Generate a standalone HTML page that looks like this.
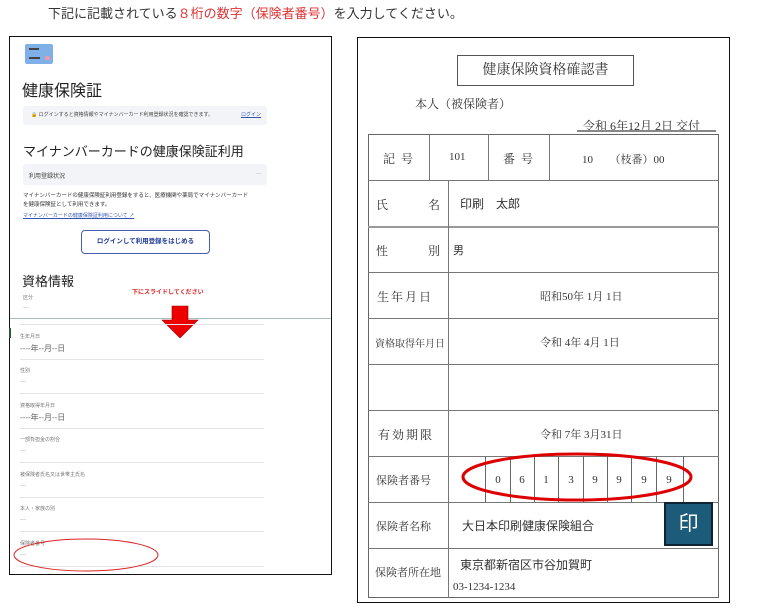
<!DOCTYPE html>
<html><head><meta charset="utf-8"><style>
*{margin:0;padding:0;box-sizing:border-box}
body{width:768px;height:614px;background:#fff;position:relative;overflow:hidden;font-family:"Liberation Sans","Noto Sans CJK JP",sans-serif;color:#222}
.a{position:absolute;white-space:nowrap}
.s{font-family:"Liberation Serif","Noto Serif CJK SC",serif}
.hl{position:absolute;height:1px;background:#e2e4e8;left:20px;width:244px}
.lb{font-size:5px;color:#777;left:20px}
.vv{font-size:6px;color:#aaa;left:20px}
.vd{font-size:8px;color:#666;left:20px}
.tl{position:absolute;background:#777}
.cell{position:absolute;font-size:11px;color:#333}
</style></head><body>
<div class="a" style="left:48px;top:3px;font-size:13px;color:#333">下記に記載されている<span style="color:#d33">８桁の数字（保険者番号）</span>を入力してください。</div>

<!-- left panel -->
<div class="a" style="left:9px;top:36px;width:323px;height:539px;border:1.5px solid #111"></div>
<div class="a" style="left:25px;top:44px;width:28px;height:20px;background:#7fb0e8;border-radius:2px"></div>
<div class="a" style="left:29px;top:48px;width:10px;height:2px;background:#444"></div>
<div class="a" style="left:29px;top:57px;width:11px;height:2px;background:#444"></div>
<div class="a" style="left:45px;top:56px;width:5px;height:4px;background:#f09a9a;border-radius:2px"></div>
<div class="a" style="left:22px;top:77px;font-size:16px;color:#222">健康保険証</div>
<div class="a" style="left:23px;top:106px;width:244px;height:19px;background:#f3f4f7;border-radius:3px"></div>
<div class="a" style="left:31px;top:111px;font-size:5px;color:#444">🔒 ログインすると資格情報やマイナンバーカード利用登録状況を確認できます。</div>
<div class="a" style="left:241px;top:111px;font-size:5px;color:#3455b0;text-decoration:underline">ログイン</div>
<div class="a" style="left:23px;top:141px;font-size:13px;color:#222">マイナンバーカードの健康保険証利用</div>
<div class="a" style="left:23px;top:164px;width:244px;height:21px;background:#f3f4f7;border-radius:3px"></div>
<div class="a" style="left:29px;top:171px;font-size:6px;color:#444">利用登録状況</div>
<div class="a" style="left:256px;top:171px;font-size:5px;color:#aaa">---</div>
<div class="a" style="left:23px;top:192px;font-size:5.5px;color:#333;line-height:9px">マイナンバーカードの健康保険証利用登録をすると、医療機関や薬局でマイナンバーカード<br>を健康保険証として利用できます。</div>
<div class="a" style="left:23px;top:212px;font-size:5px;color:#3455b0;text-decoration:underline">マイナンバーカードの健康保険証利用について ↗</div>
<div class="a" style="left:81px;top:230px;width:129px;height:24px;border:1px solid #4a5fb0;border-radius:4px;font-size:6.5px;font-weight:bold;color:#233a9c;text-align:center;line-height:22px">ログインして利用登録をはじめる</div>
<div class="a" style="left:22px;top:271px;font-size:13px;color:#222">資格情報</div>
<div class="a lb" style="left:23px;top:294px">区分</div>
<div class="a" style="left:132px;top:287px;font-size:6px;font-weight:bold;color:#d22">下にスライドしてください</div>
<div class="a vv" style="left:23px;top:305px">---</div>
<div class="a" style="left:10px;top:318px;width:321px;height:1px;background:#a8bcc8"></div>
<div class="a" style="left:9px;top:328px;width:2px;height:10px;background:#2a5a3a"></div>
<svg class="a" style="left:161px;top:305px" width="38" height="34"><polygon points="11,1 27,1 27,15 37,15 19,33 1,15 11,15" fill="#e00" stroke="#900" stroke-width="0.6"/></svg>
<div class="hl" style="top:324px"></div>
<div class="a lb" style="top:333px">生年月日</div>
<div class="a vd" style="top:343px">----年--月--日</div>
<div class="hl" style="top:359px"></div>
<div class="a lb" style="top:367px">性別</div>
<div class="a vv" style="top:379px">---</div>
<div class="hl" style="top:393px"></div>
<div class="a lb" style="top:402px">資格取得年月日</div>
<div class="a vd" style="top:412px">----年--月--日</div>
<div class="hl" style="top:428px"></div>
<div class="a lb" style="top:436px">一部負担金の割合</div>
<div class="a vv" style="top:448px">---</div>
<div class="hl" style="top:462px"></div>
<div class="a lb" style="top:471px">被保険者氏名又は世帯主氏名</div>
<div class="a vv" style="top:483px">---</div>
<div class="hl" style="top:497px"></div>
<div class="a lb" style="top:505px">本人・家族の別</div>
<div class="a vv" style="top:517px">---</div>
<div class="hl" style="top:531px"></div>
<div class="a lb" style="top:540px">保険者番号</div>
<div class="a vv" style="top:552px">---</div>
<div class="hl" style="top:566px"></div>
<svg class="a" style="left:0;top:0" width="340" height="614"><ellipse cx="86" cy="555" rx="72" ry="16" fill="none" stroke="#d22" stroke-width="1"/></svg>

<!-- right panel -->
<div class="a" style="left:357px;top:37px;width:373px;height:566px;border:1.5px solid #111"></div>
<div class="a s" style="left:457px;top:55px;width:177px;height:31px;border:1px solid #555;font-size:14px;text-align:center;line-height:29px;color:#333">健康保険資格確認書</div>
<div class="a s" style="left:415px;top:95px;font-size:12px;color:#333">本人（被保険者）</div>
<div class="a s" style="left:583px;top:117px;font-size:12px;color:#333">令和 6年12月 2日 交付</div>
<div class="a" style="left:577px;top:130px;width:139px;height:2px;background:#888"></div>
<div class="a" style="left:368px;top:134px;width:351px;height:464px;border:1px solid #666"></div>
<div class="tl" style="left:368px;top:180px;width:351px;height:1px"></div>
<div class="tl" style="left:368px;top:226px;width:351px;height:2px;background:#999"></div>
<div class="tl" style="left:368px;top:272px;width:351px;height:1px"></div>
<div class="tl" style="left:368px;top:318px;width:351px;height:1px"></div>
<div class="tl" style="left:368px;top:364px;width:351px;height:1px"></div>
<div class="tl" style="left:368px;top:410px;width:351px;height:1px"></div>
<div class="tl" style="left:368px;top:456px;width:351px;height:1px"></div>
<div class="tl" style="left:368px;top:502px;width:351px;height:1px"></div>
<div class="tl" style="left:368px;top:548px;width:351px;height:1px"></div>
<div class="tl" style="left:429px;top:134px;width:1px;height:46px"></div>
<div class="tl" style="left:488px;top:134px;width:1px;height:46px"></div>
<div class="tl" style="left:549px;top:134px;width:1px;height:46px"></div>
<div class="tl" style="left:448px;top:180px;width:1px;height:418px"></div>
<div class="cell s" style="left:383px;top:150px;font-size:12px;letter-spacing:6px">記号</div>
<div class="cell s" style="left:449px;top:151px">101</div>
<div class="cell s" style="left:503px;top:150px;font-size:12px;letter-spacing:6px">番号</div>
<div class="cell s" style="left:582px;top:151px">10　　（枝番）00</div>
<div class="cell s" style="left:376px;top:196px;font-size:12px">氏</div><div class="cell s" style="left:428px;top:196px;font-size:12px">名</div>
<div class="cell" style="left:460px;top:195px;font-size:12px">印刷　太郎</div>
<div class="cell s" style="left:376px;top:242px;font-size:12px">性</div><div class="cell s" style="left:428px;top:242px;font-size:12px">別</div>
<div class="cell" style="left:453px;top:242px;font-size:11px">男</div>
<div class="cell s" style="left:377px;top:288px;font-size:12px;letter-spacing:2px">生年月日</div>
<div class="cell s" style="left:540px;top:288px">昭和50年 1月 1日</div>
<div class="cell s" style="left:375px;top:335px;font-size:10px">資格取得年月日</div>
<div class="cell s" style="left:540px;top:334px">令和 4年 4月 1日</div>
<div class="cell s" style="left:378px;top:426px;font-size:12px;letter-spacing:2px">有効期限</div>
<div class="cell s" style="left:540px;top:426px">令和 7年 3月31日</div>
<div class="cell s" style="left:376px;top:472px;font-size:11px">保険者番号</div>
<div class="cell s" style="left:376px;top:518px;font-size:11px">保険者名称</div>
<div class="cell" style="left:462px;top:517px;font-size:12px">大日本印刷健康保険組合</div>
<div class="cell s" style="left:375px;top:564px;font-size:11px">保険者所在地</div>
<div class="cell" style="left:460px;top:556px;font-size:12px">東京都新宿区市谷加賀町</div>
<div class="cell s" style="left:453px;top:581px;font-size:11px">03-1234-1234</div>
<svg class="a" style="left:480px;top:456px" width="210" height="47">
<g stroke="#666" stroke-width="1"><line x1="5.5" y1="0" x2="5.5" y2="46"/><line x1="30.5" y1="0" x2="30.5" y2="46"/><line x1="54.5" y1="0" x2="54.5" y2="46"/><line x1="78.5" y1="0" x2="78.5" y2="46"/><line x1="103.5" y1="0" x2="103.5" y2="46"/><line x1="127.5" y1="0" x2="127.5" y2="46"/><line x1="151.5" y1="0" x2="151.5" y2="46"/><line x1="176.5" y1="0" x2="176.5" y2="46"/><line x1="203.5" y1="0" x2="203.5" y2="46"/></g>
<g font-family="Liberation Serif,serif" font-size="11" fill="#333" text-anchor="middle"><text x="18" y="27">0</text><text x="42" y="27">6</text><text x="66" y="27">1</text><text x="91" y="27">3</text><text x="115" y="27">9</text><text x="139" y="27">9</text><text x="164" y="27">9</text><text x="189" y="27">9</text></g>
</svg>
<svg class="a" style="left:440px;top:440px" width="280" height="80"><ellipse cx="137" cy="37" rx="114" ry="23" fill="none" stroke="#d00" stroke-width="3"/></svg>
<div class="a" style="left:664px;top:502px;width:49px;height:44px;background:#1d5b7a;border:2px solid #123;color:#fff;font-size:20px;text-align:center;line-height:40px">印</div>
</body></html>
